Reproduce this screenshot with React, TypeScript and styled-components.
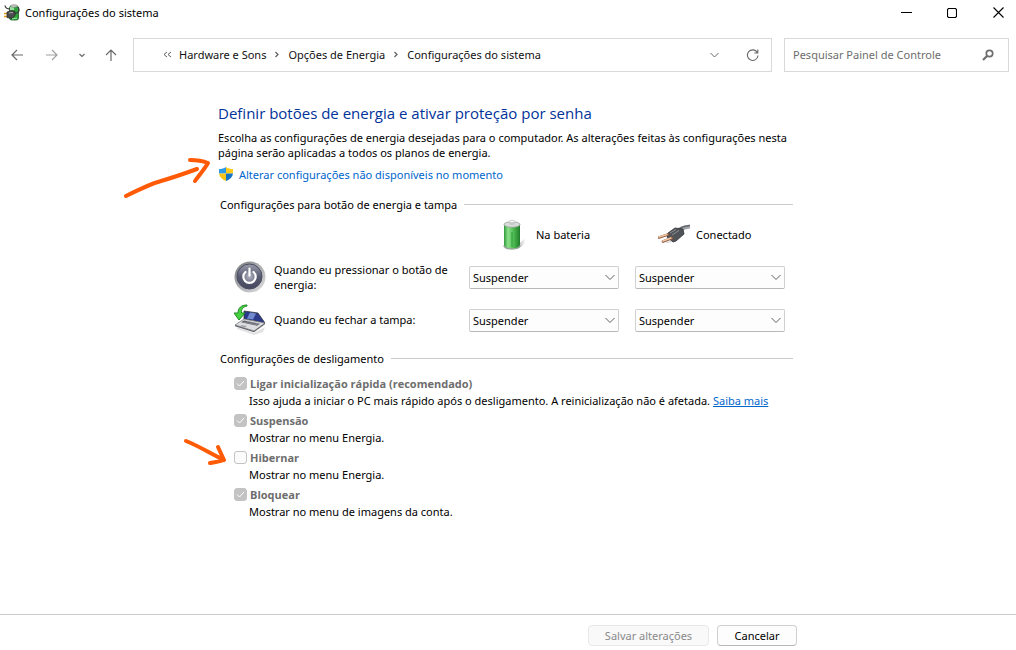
import React from "react";
import styled, { createGlobalStyle } from "styled-components";

const GlobalStyle = createGlobalStyle`
  *, *::before, *::after { box-sizing: border-box; }
  body {
    margin: 0;
    background: #fff;
    color: #000;
    font-family: "Segoe UI", "Noto Sans", sans-serif;
    font-size: 11px;
    line-height: 15px;
  }
  button, input, select { font: inherit; color: inherit; margin: 0; }
  h1, h2, p { margin: 0; font: inherit; }
  svg { display: block; flex: none; }
`;

const Window = styled.div`
  min-height: 100vh;
  display: flex;
  flex-direction: column;
`;

const TitleBar = styled.header`
  display: flex;
  align-items: center;
  height: 25px;
  padding-left: 4px;
  gap: 5px;
`;

const WindowTitle = styled.h1`
  flex: 1;
`;

const WindowButtons = styled.div`
  display: flex;
  gap: 10px;
`;

const IconButton = styled.button<{ $width: number; $color?: string }>`
  display: flex;
  align-items: center;
  justify-content: center;
  width: ${(p) => p.$width}px;
  height: 24px;
  padding: 0;
  border: 0;
  background: none;
  color: ${(p) => p.$color ?? "#6a6a6a"};
`;

const NavBar = styled.nav`
  display: flex;
  align-items: center;
  margin-top: 13px;
  padding-right: 7px;
  gap: 12px;
`;

const NavGroup = styled.div`
  flex: 1;
  display: flex;
  align-items: center;
  gap: 5px;
`;

const NavButtons = styled.div`
  display: flex;
`;

const AddressBar = styled.div`
  flex: 1;
  display: flex;
  align-items: center;
  height: 34px;
  border: 1px solid #d9d9d9;
  padding: 0 6px 0 29px;
`;

const Crumbs = styled.div`
  flex: 1;
  display: flex;
  align-items: center;
  gap: 8px;
  padding-bottom: 2px;
  color: #5f5f5f;
`;

const Crumb = styled.a`
  color: #111;
  text-decoration: none;
`;

const SearchBox = styled.label`
  display: flex;
  align-items: center;
  width: 225px;
  height: 34px;
  border: 1px solid #d9d9d9;
  padding: 0 14px 0 8px;
`;

const SearchInput = styled.input`
  flex: 1;
  min-width: 0;
  padding: 0 0 2px;
  border: 0;
  outline: 0;
  background: none;
  &::placeholder { color: #6d6d6d; opacity: 1; }
`;

const Column = styled.div`
  position: relative;
  width: 100%;
  max-width: 580px;
  margin: 0 auto;
`;

const Main = styled.main`
  flex: 1;
  padding-top: 30px;
`;

const Heading = styled.h2`
  font-family: "Segoe UI", "Open Sans", sans-serif;
  font-size: 15px;
  line-height: 22px;
  color: #003399;
`;

const Intro = styled.p`
  margin-top: 6px;
`;

const AdminLink = styled.a`
  display: flex;
  align-items: center;
  gap: 5px;
  margin: 6px 0 14px;
  color: #0066cc;
  text-decoration: none;
`;

const Section = styled.section`
  padding: 0 5px 0 2px;
`;

const SectionTitle = styled.h2`
  display: flex;
  align-items: center;
  gap: 7px;
  height: 16px;
  &::after {
    content: "";
    flex: 1;
    height: 1px;
    background: #cacaca;
  }
`;

const PowerTable = styled.table`
  width: 100%;
  margin: 1px 0 8px;
  border-collapse: collapse;
  table-layout: fixed;
  th, td { padding: 0; font-weight: normal; text-align: left; }
`;

const Row = styled.tr`
  height: 43px;
`;

const HeaderCell = styled.div<{ $indent: number }>`
  display: flex;
  align-items: center;
  gap: 6px;
  padding-left: ${(p) => p.$indent}px;
`;

const RowLabel = styled.div`
  display: flex;
  align-items: center;
  gap: 8px;
  padding: 0 0 2px 14px;
`;

const SelectWrap = styled.div`
  display: grid;
  align-items: center;
  width: 150px;
  > * { grid-area: 1 / 1; }
  svg { justify-self: end; margin-right: 4px; color: #5f5f5f; pointer-events: none; }
`;

const Select = styled.select`
  appearance: none;
  width: 100%;
  height: 23px;
  padding: 0 20px 0 3px;
  border: 1px solid #d0d0d0;
  border-bottom-color: #b8b8b8;
  border-radius: 2px;
  background: #fdfdfd;
`;

const Options = styled.div`
  margin-top: 9px;
  padding-left: 14px;
`;

const OptionLabel = styled.label`
  display: flex;
  align-items: center;
  gap: 3px;
  height: 17px;
  font-family: "Segoe UI", "Open Sans", sans-serif;
  font-weight: bold;
  color: #6d6d6d;
`;

const CheckWrap = styled.span`
  display: grid;
  place-items: center;
  > * { grid-area: 1 / 1; }
  svg { pointer-events: none; }
`;

const Checkbox = styled.input`
  appearance: none;
  width: 13px;
  height: 13px;
  border: 1px solid #c3c3c3;
  border-radius: 3px;
  background: #fbfbfb;
  &:checked { background: #c3c3c3; }
`;

const OptionText = styled.p`
  height: 20px;
  padding: 1px 0 0 15px;
`;

const MoreLink = styled.a`
  color: #0066cc;
`;

const Footer = styled.footer`
  border-top: 1px solid #cacaca;
  padding: 10px 0 4px;
`;

const Actions = styled.div`
  display: flex;
  justify-content: flex-end;
  gap: 8px;
  padding-right: 1px;
`;

const Action = styled.button<{ $width: number }>`
  width: ${(p) => p.$width}px;
  height: 21px;
  padding: 0;
  border: 1px solid #d0d0d0;
  border-bottom-color: #b8b8b8;
  border-radius: 4px;
  background: #fdfdfd;
  &:disabled {
    color: #8a8a8a;
    background: #f9f9f9;
    border-color: #e8e8e8;
  }
`;

const Mark = styled.svg<{ $left: number; $top: number }>`
  position: absolute;
  left: ${(p) => p.$left}px;
  top: ${(p) => p.$top}px;
  pointer-events: none;
  fill: none;
  stroke: #ff5a05;
  stroke-width: 4;
  stroke-linecap: round;
  stroke-linejoin: round;
`;

const Line = ({ d, w, h, sw = 1.2 }: { d: string; w: number; h: number; sw?: number }) => (
  <svg width={w} height={h} viewBox={`0 0 ${w} ${h}`} fill="none" stroke="currentColor" strokeWidth={sw} aria-hidden="true">
    <path d={d} />
  </svg>
);

const AppIcon = () => (
  <svg width="16" height="17" viewBox="0 0 16 17" aria-hidden="true">
    <rect x="5.5" y="2" width="9" height="14" rx="2" fill="#2da33c" stroke="#1b5e25" strokeWidth=".8" />
    <path d="M7 3v4M9 3v3" stroke="#b5efb5" strokeWidth="1.6" />
    <ellipse cx="10" cy="2" rx="3.5" ry="1.3" fill="#c9ccc9" stroke="#666" strokeWidth=".5" />
    <path d="M1 1.5c.5 3 3 3.5 5 3.5M14 3c2 3 1 6-3 6.500" fill="none" stroke="#3c3c3c" strokeWidth="1.3" />
    <path d="M0 9.500h4M0 12.500h4" stroke="#e29b17" strokeWidth="1.4" />
    <path d="M3 8l4-1.500 4 1v4l-3 3-5-1z" fill="#4a4d50" stroke="#222" strokeWidth=".7" />
    <path d="M5 9l4-.5" stroke="#aaa" strokeWidth="1" />
    <path d="M8 15l5-1" stroke="#9be79b" strokeWidth="1" />
  </svg>
);

const Shield = () => (
  <svg width="16" height="16" viewBox="0 0 16 16" aria-hidden="true">
    <path d="M8 1C6 2.500 3.500 3 1 3v4.500h7z" fill="#2d9be8" />
    <path d="M8 1c2 1.500 4.500 2 7 2v4.500H8z" fill="#fccb1e" />
    <path d="M1 7.500h7V15C4 13.500 1.500 11 1 7.500z" fill="#f8c41c" />
    <path d="M15 7.500H8V15c4-1.500 6.500-4 7-7.500z" fill="#1574c4" />
  </svg>
);

const Battery = () => (
  <svg width="32" height="32" viewBox="0 0 32 32" aria-hidden="true">
    <defs>
      <linearGradient id="cell">
        <stop offset="0" stopColor="#2f9a3b" />
        <stop offset=".25" stopColor="#8de08a" />
        <stop offset=".6" stopColor="#4dbb52" />
        <stop offset="1" stopColor="#1f7c2a" />
      </linearGradient>
      <linearGradient id="shade">
        <stop offset="0" stopColor="#999" />
        <stop offset="1" stopColor="#fff" />
      </linearGradient>
    </defs>
    <path d="M20 26l6-6c3 1 2 5-5 9z" fill="url(#shade)" opacity=".7" />
    <path d="M6 5v22c0 4 16 4 16 0V5z" fill="url(#cell)" />
    <path d="M6 26.500c0 4.500 16 4.500 16 0" fill="none" stroke="#9aa89a" strokeWidth="1.500" />
    <ellipse cx="14" cy="5.500" rx="8" ry="2.800" fill="#d8dcd8" stroke="#98a098" strokeWidth=".8" />
    <path d="M11 2.500v2.300c0 1.600 6 1.600 6 0V2.500z" fill="#c8ccc8" />
    <ellipse cx="14" cy="2.500" rx="3" ry="1.300" fill="#f4f4f4" stroke="#aaa" strokeWidth=".5" />
    <path d="M14 13v15" stroke="#2d9a38" strokeWidth="1" />
  </svg>
);

const Plug = () => (
  <svg width="32" height="32" viewBox="0 0 32 32" aria-hidden="true">
    <path d="M20 12C24 8 27 8.500 32 7.500" fill="none" stroke="#a4a7ac" strokeWidth="4" />
    <path d="M20 11C24 7 27 7.500 32 6.500" fill="none" stroke="#686b71" strokeWidth="1.500" />
    <path d="M10 14l7-5 8 1 1 5-8 7-3 1-6-5z" fill="#505358" stroke="#303236" strokeWidth=".8" />
    <path d="M12 14l6-3.500M14 16l7-4.500" stroke="#8b8e92" strokeWidth="1" />
    <path d="M1 18.500l9-3M5 22.500l9-3.500" stroke="#8a5a42" strokeWidth="2.600" strokeLinecap="round" />
    <path d="M1 18l8-2.500M5 22l8-3" stroke="#f3c8a4" strokeWidth="1.500" strokeLinecap="round" />
    <path d="M8 23.500l6-1" stroke="#ccc" strokeWidth="1" />
  </svg>
);

const PowerButton = () => (
  <svg width="32" height="32" viewBox="0 0 32 32" aria-hidden="true">
    <defs>
      <linearGradient id="rim" x2="1" y2="1">
        <stop offset="0" stopColor="#777a7e" />
        <stop offset="1" stopColor="#e2e2e4" />
      </linearGradient>
      <linearGradient id="face" x2="0" y2="1">
        <stop offset="0" stopColor="#9a9cab" />
        <stop offset=".5" stopColor="#5a5c72" />
        <stop offset="1" stopColor="#45475e" />
      </linearGradient>
      <radialGradient id="glow">
        <stop offset="0" stopColor="#b4b5c2" />
        <stop offset="1" stopColor="#75778c" />
      </radialGradient>
    </defs>
    <circle cx="16" cy="16" r="15.500" fill="url(#rim)" />
    <circle cx="15.500" cy="15.500" r="12.500" fill="url(#face)" stroke="#4a4c60" strokeWidth="1" />
    <circle cx="15.500" cy="15.500" r="6" fill="url(#glow)" />
    <path d="M11.500 11a6.200 6.200 0 1 0 8 0M15.500 7.500v7" fill="none" stroke="#fff" strokeWidth="2.200" strokeLinecap="round" />
  </svg>
);

const Laptop = () => (
  <svg width="32" height="32" viewBox="0 0 32 32" aria-hidden="true">
    <path d="M3 23l17 6 11-6-2 5-9 3-17-6z" fill="#e2e2e2" />
    <path d="M10 7l14 2 7 10-21-4z" fill="#2b3b8a" stroke="#33353e" strokeWidth=".8" />
    <path d="M16 8.500l6 1-3 6-6-1z" fill="#7089cf" />
    <path d="M10 15l21 4-11 8L1 21z" fill="#dcdde0" stroke="#74767b" strokeWidth=".7" />
    <path d="M10 16.500l16 3.200-3 2-16-3.400z" fill="#5a5d65" />
    <path d="M9 18l15 3M12 17l13 3" stroke="#9da0a7" strokeWidth=".6" />
    <path d="M8 21l5 1-2 1.500-5-1.300z" fill="#a5a7ac" />
    <path d="M1 21l19 6 11-8v1.200l-11 8-19-6z" fill="#62646a" />
    <path d="M13 1C7 1 4 4 4 9H0l5 7 6-7H7.500C7 5 9 3 13 2z" fill="#48d043" stroke="#1d8a25" strokeWidth="1" strokeLinejoin="round" />
  </svg>
);

const SearchIcon = () => (
  <svg width="12" height="12" viewBox="0 0 12 12" fill="none" stroke="#6d6d6d" aria-hidden="true">
    <circle cx="7.500" cy="4.500" r="3.200" strokeWidth="1.700" />
    <path d="M5 7L1 11" strokeWidth="2.200" />
  </svg>
);

const PowerSelect = ({ label }: { label: string }) => (
  <SelectWrap>
    <Select aria-label={label} defaultValue="Suspender">
      <option>Suspender</option>
      <option>Hibernar</option>
      <option>Desligar</option>
    </Select>
    <Line d="M.5 1l4.500 4.500L9.500 1" w={10} h={7} sw={1} />
  </SelectWrap>
);

const powerRows = [
  { icon: <PowerButton />, text: <>Quando eu pressionar o botão de<br />energia:</>, name: "Botão de energia" },
  { icon: <Laptop />, text: "Quando eu fechar a tampa:", name: "Tampa" },
];

const options = [
  {
    title: "Ligar inicialização rápida (recomendado)",
    text: "Isso ajuda a iniciar o PC mais rápido após o desligamento. A reinicialização não é afetada. ",
    checked: true,
    more: true,
  },
  { title: "Suspensão", text: "Mostrar no menu Energia.", checked: true },
  { title: "Hibernar", text: "Mostrar no menu Energia.", checked: false },
  { title: "Bloquear", text: "Mostrar no menu de imagens da conta.", checked: true },
];

export default function App() {
  return (
    <Window>
      <GlobalStyle />
      <TitleBar>
        <AppIcon />
        <WindowTitle>Configurações do sistema</WindowTitle>
        <WindowButtons>
          <IconButton $width={36} $color="#000" aria-label="Minimizar">
            <Line d="M0 5.500h11" w={11} h={11} sw={1} />
          </IconButton>
          <IconButton $width={36} $color="#000" aria-label="Maximizar">
            <Line d="M1.500.5h7l1 1v7l-1 1h-7l-1-1v-7z" w={10} h={10} sw={1.1} />
          </IconButton>
          <IconButton $width={36} $color="#000" aria-label="Fechar">
            <Line d="M.5.5l10 10M10.500.5l-10 10" w={11} h={11} sw={1.1} />
          </IconButton>
        </WindowButtons>
      </TitleBar>

      <NavBar>
        <NavGroup>
          <NavButtons>
            <IconButton $width={34} aria-label="Voltar">
              <Line d="M12 6H1M6 1L1 6l5 5" w={12} h={12} />
            </IconButton>
            <IconButton $width={36} $color="#a0a0a0" aria-label="Avançar">
              <Line d="M0 6h11M6 1l5 5-5 5" w={12} h={12} />
            </IconButton>
            <IconButton $width={24} aria-label="Locais recentes">
              <Line d="M.5 1L3 3.500 5.500 1" w={6} h={5} />
            </IconButton>
            <IconButton $width={34} aria-label="Acima">
              <Line d="M6 12V1M1 6l5-5 5 5" w={12} h={12} />
            </IconButton>
          </NavButtons>
          <AddressBar>
            <Crumbs>
              <Line d="M4 1L1 3.500 4 6M8 1L5 3.500 8 6" w={8} h={7} sw={1} />
              <Crumb href="#hardware">Hardware e Sons</Crumb>
              <Line d="M1.500 1L4 3.500 1.500 6" w={6} h={7} />
              <Crumb href="#energia">Opções de Energia</Crumb>
              <Line d="M1.500 1L4 3.500 1.500 6" w={6} h={7} />
              <Crumb href="#sistema">Configurações do sistema</Crumb>
            </Crumbs>
            <IconButton $width={50} aria-label="Locais anteriores">
              <Line d="M.5 1l4 4 4-4" w={9} h={6} sw={1} />
            </IconButton>
            <IconButton $width={26} aria-label="Atualizar">
              <Line d="M11.300 3.500A5.300 5.300 0 1 0 12 6.500M11.800.5v3.500H8.300" w={13} h={13} sw={1.1} />
            </IconButton>
          </AddressBar>
        </NavGroup>
        <SearchBox>
          <SearchInput placeholder="Pesquisar Painel de Controle" aria-label="Pesquisar Painel de Controle" />
          <SearchIcon />
        </SearchBox>
      </NavBar>

      <Main>
        <Column>
          <Heading>Definir botões de energia e ativar proteção por senha</Heading>
          <Intro>
            Escolha as configurações de energia desejadas para o computador. As alterações feitas às configurações nesta
            <br />
            página serão aplicadas a todos os planos de energia.
          </Intro>
          <AdminLink href="#admin">
            <Shield />
            Alterar configurações não disponíveis no momento
          </AdminLink>

          <Section>
            <SectionTitle>Configurações para botão de energia e tampa</SectionTitle>
            <PowerTable>
              <colgroup>
                <col />
                <col width="166" />
                <col width="158" />
              </colgroup>
              <thead>
                <Row>
                  <td />
                  <th scope="col"><HeaderCell $indent={29}><Battery />Na bateria</HeaderCell></th>
                  <th scope="col"><HeaderCell $indent={23}><Plug />Conectado</HeaderCell></th>
                </Row>
              </thead>
              <tbody>
                {powerRows.map((row) => (
                  <Row key={row.name}>
                    <th scope="row"><RowLabel>{row.icon}<span>{row.text}</span></RowLabel></th>
                    <td><PowerSelect label={`${row.name}, na bateria`} /></td>
                    <td><PowerSelect label={`${row.name}, conectado`} /></td>
                  </Row>
                ))}
              </tbody>
            </PowerTable>
          </Section>

          <Section>
            <SectionTitle>Configurações de desligamento</SectionTitle>
            <Options>
              {options.map((o) => (
                <div key={o.title}>
                  <OptionLabel>
                    <CheckWrap>
                      <Checkbox type="checkbox" defaultChecked={o.checked} disabled />
                      {o.checked && (
                        <svg width="9" height="7" viewBox="0 0 9 7" fill="none" stroke="#fff" aria-hidden="true">
                          <path d="M1 3.500L3.500 6 8 1" />
                        </svg>
                      )}
                    </CheckWrap>
                    {o.title}
                  </OptionLabel>
                  <OptionText>
                    {o.text}
                    {o.more && <MoreLink href="#mais">Saiba mais</MoreLink>}
                  </OptionText>
                </div>
              ))}
            </Options>
          </Section>

          <Mark $left={-98} $top={51} width="92" height="50" viewBox="120 153 92 50">
            <path d="M126 196C140 189 150 184 161 181C175 177 186 173 197 169M190 160C197 160 203 161 208 163C204 170 199 175 195 181" />
          </Mark>
          <Mark $left={-38} $top={333} width="50" height="36" viewBox="180 435 50 36">
            <path d="M186 441C199 446 211 454 224 460M218 447L224 460C219 462 215 462 210 463" />
          </Mark>
        </Column>
      </Main>

      <Footer>
        <Column>
          <Actions>
            <Action $width={121} disabled>Salvar alterações</Action>
            <Action $width={80}>Cancelar</Action>
          </Actions>
        </Column>
      </Footer>
    </Window>
  );
}
